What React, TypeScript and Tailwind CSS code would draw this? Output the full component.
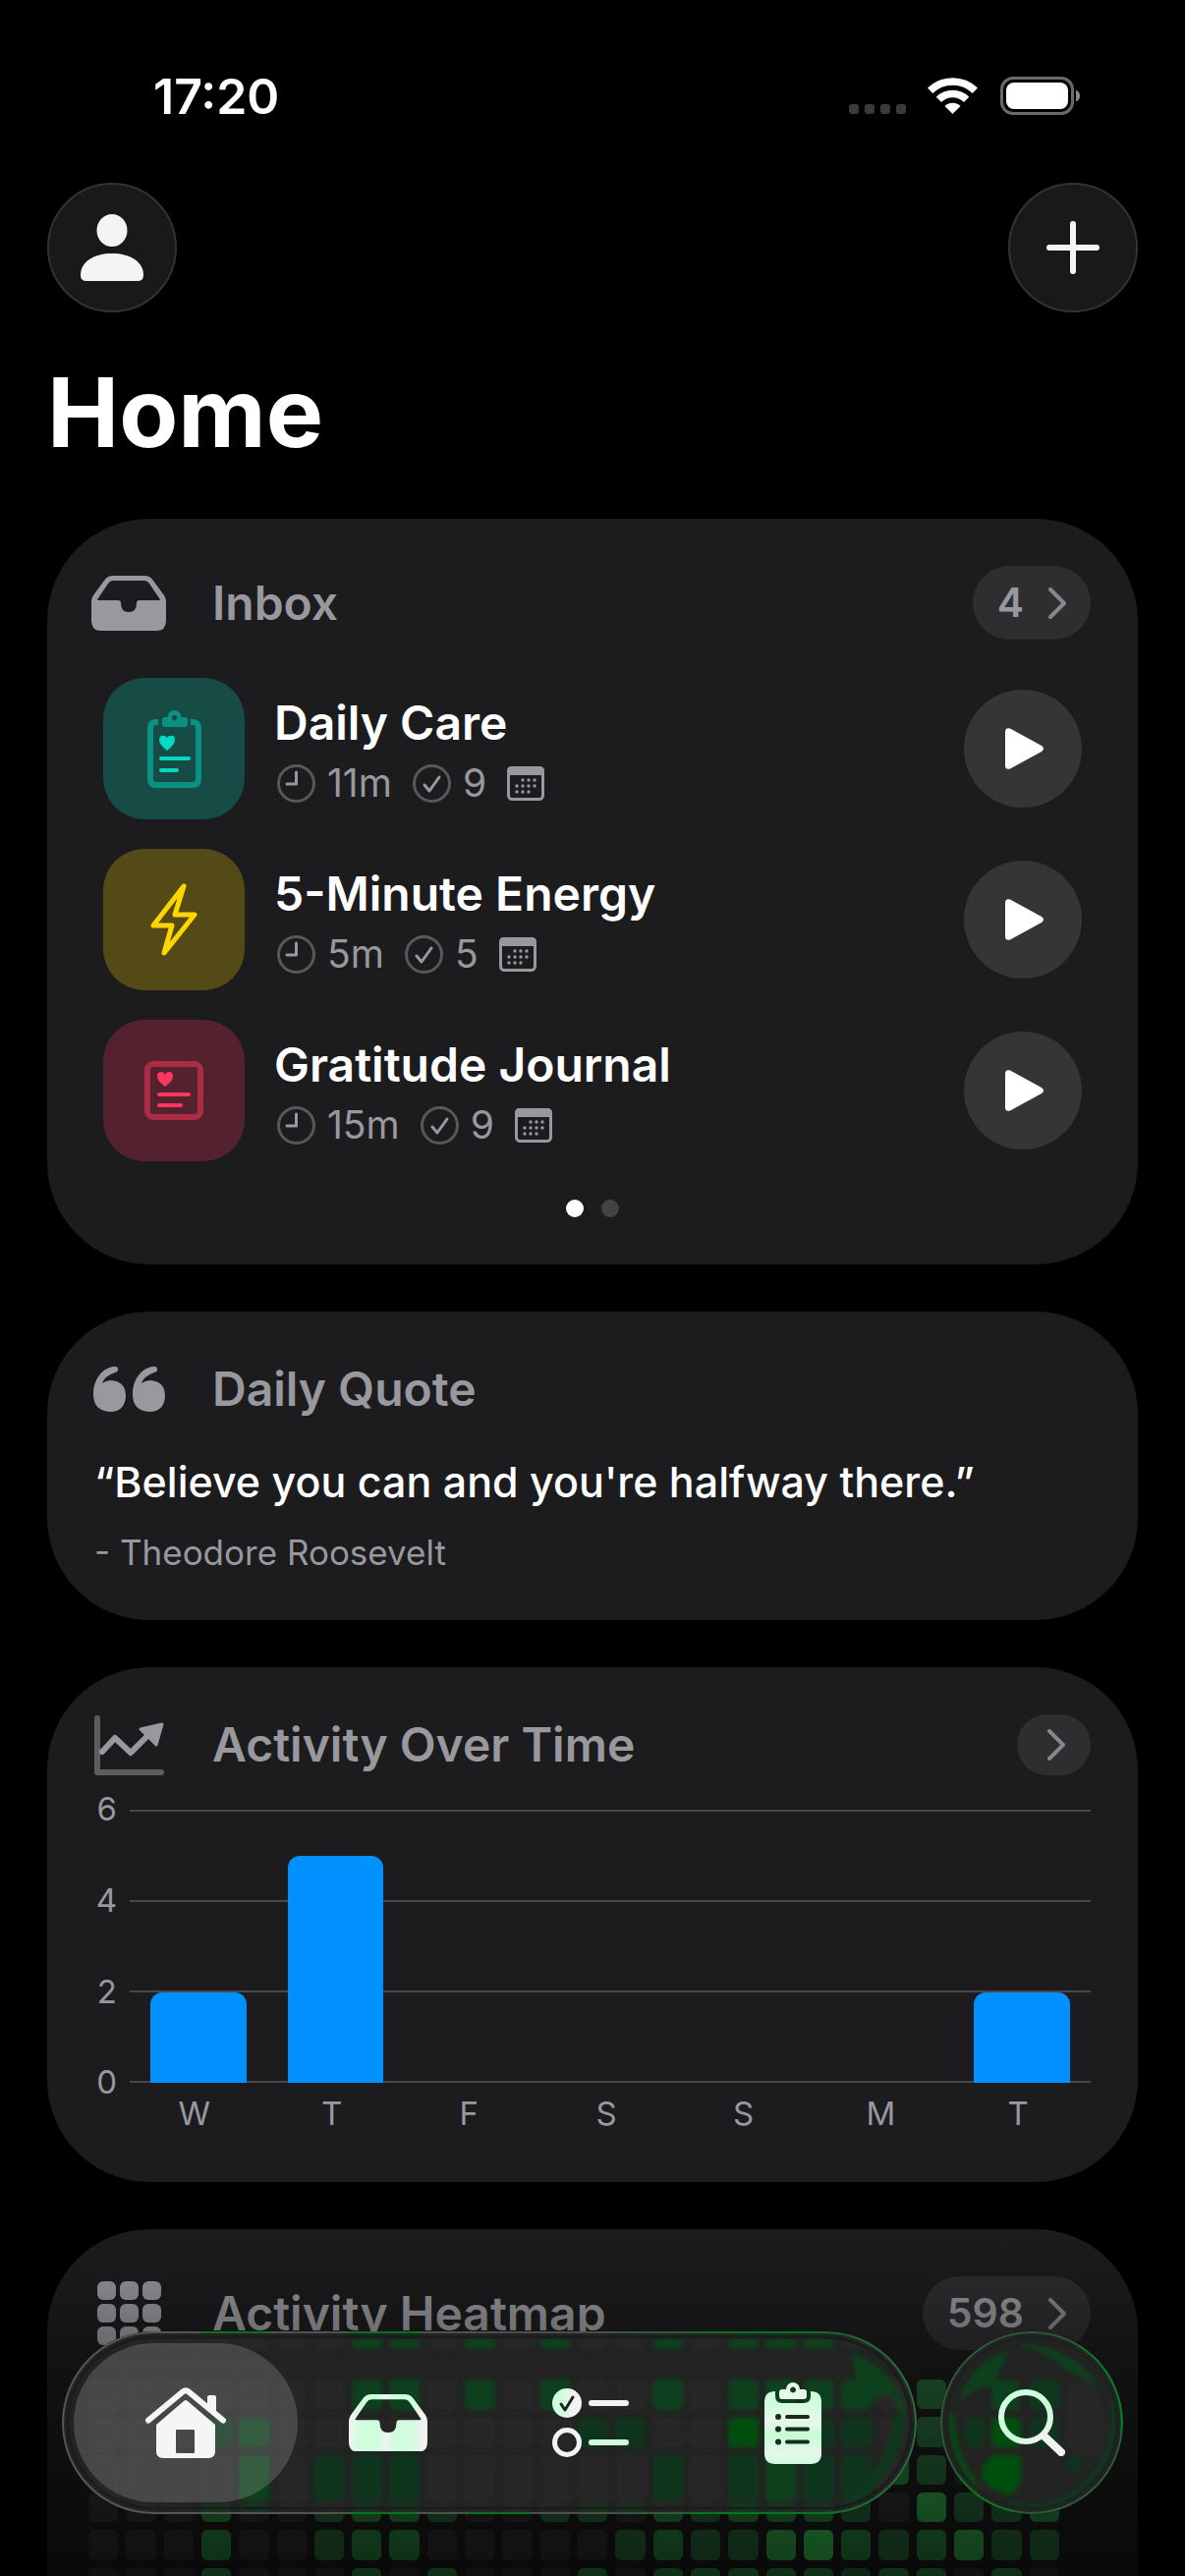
import type { ReactNode } from 'react'

const routines = [
  { title: 'Daily Care', minutes: '11m', tasks: 9, tile: 'bg-[#174b46]', icon: <CareIcon /> },
  { title: '5-Minute Energy', minutes: '5m', tasks: 5, tile: 'bg-[#544a17]', icon: <BoltIcon /> },
  { title: 'Gratitude Journal', minutes: '15m', tasks: 9, tile: 'bg-[#54222e]', icon: <JournalIcon /> },
]

const activity = [
  { day: 'W', value: 2 },
  { day: 'T', value: 5 },
  { day: 'F', value: 0 },
  { day: 'S', value: 0 },
  { day: 'S', value: 0 },
  { day: 'M', value: 0 },
  { day: 'T', value: 2 },
]
const maxActivity = 6
const ticks = [6, 4, 2, 0]

// one digit per day, 0 = no activity, 4 = most
const heatmap = [
  '00000002202020020222221000',
  '00020000000002210322221110',
  '00020022200000020222121000',
  '00020012210011021222103112',
  '00020012200000121134212311',
  '00020002020002022222122020',
  '00010002020002012022122010',
]

const levels = ['bg-[#2f2f31]', 'bg-[#28693a]', 'bg-[#28873e]', 'bg-[#32ad4e]', 'bg-[#32c852]']

export default function App() {
  return (
    <div className="relative h-screen overflow-hidden bg-black text-white antialiased [font-family:Inter,sans-serif]">
      <StatusBar />
      <main className="px-12">
        <header>
          <div className="flex items-center justify-between">
            <RoundButton label="Profile">
              <svg width="64" height="68" viewBox="0 0 64 68" fill="#f4f4f5">
                <ellipse cx="32" cy="16.500" rx="15.500" ry="16.500" />
                <path d="M0 62C0 48 14 40 32 40s32 8 32 22q0 6-6 6H6q-6 0-6-6z" />
              </svg>
            </RoundButton>
            <RoundButton label="Add">
              <svg width="54" height="54" viewBox="0 0 54 54" stroke="#f4f4f5" strokeWidth="6" strokeLinecap="round">
                <path d="M27 3v48M3 27h48" />
              </svg>
            </RoundButton>
          </div>
          <h1 className="mt-[42px] text-[98px] leading-[120px] font-bold">Home</h1>
        </header>

        <div className="mt-12 flex flex-col gap-12">
          <Card title="Inbox" icon={<TrayIcon className="w-[76px]" />} action={<MoreButton label="Open inbox" count={4} />}>
            <ul className="mt-[39px] flex flex-col gap-[30px] px-[9px]">
              {routines.map((routine) => (
                <li key={routine.title} className="flex items-center">
                  <div className={`flex size-36 items-center justify-center rounded-[42px] ${routine.tile}`}>
                    {routine.icon}
                  </div>
                  <div className="ml-[30px] flex-1 pt-1.5">
                    <h3 className="text-[48px] leading-[60px] font-semibold">{routine.title}</h3>
                    <div className="mt-[5px] flex h-[54px] items-center text-[39px] text-[#98989e]">
                      <ClockIcon />
                      <span className="ml-3">{routine.minutes}</span>
                      <CheckIcon />
                      <span className="ml-3">{routine.tasks}</span>
                      <CalendarIcon />
                    </div>
                  </div>
                  <button
                    aria-label={`Start ${routine.title}`}
                    className="flex size-[120px] items-center justify-center rounded-full bg-[#353537]"
                  >
                    <svg width="43" height="44" viewBox="0 0 43 44" fill="white">
                      <path d="M3 5Q3 0 8 1.500L40 19q4 3 0 6L8 42.500Q3 44 3 39z" />
                    </svg>
                  </button>
                </li>
              ))}
            </ul>
            <div className="mt-[39px] flex justify-center gap-[18px]">
              <span className="size-[18px] rounded-full bg-white" />
              <span className="size-[18px] rounded-full bg-[#434346]" />
            </div>
          </Card>

          <Card title="Daily Quote" icon={<QuoteIcon />}>
            <blockquote>
              <p className="mt-9 text-[43px] leading-[54px] font-medium">“Believe you can and you're halfway there.”</p>
              <footer className="mt-6 text-[35px] leading-[42px] text-[#98989e]">- Theodore Roosevelt</footer>
            </blockquote>
          </Card>

          <Card title="Activity Over Time" icon={<TrendIcon />} action={<MoreButton label="Open activity" />}>
            <ActivityChart />
          </Card>

          <Card title="Activity Heatmap" icon={<GridIcon />} action={<MoreButton label="Open heatmap" count={598} />}>
            <div className="mt-[30px] mr-8 -ml-1.5 grid grid-cols-[repeat(26,minmax(0,1fr))] gap-2">
              {heatmap.flatMap((row, y) =>
                row.split('').map((level, x) => (
                  <span key={`${y}-${x}`} className={`aspect-square rounded-md ${levels[Number(level)]}`} />
                ))
              )}
            </div>
          </Card>
        </div>
      </main>
      <div className="pointer-events-none absolute inset-x-0 bottom-0 h-[350px] bg-linear-to-b from-transparent via-black/42 via-[45%] to-black/65" />
      <TabBar />
    </div>
  )
}

function StatusBar() {
  return (
    <div className="flex items-center justify-between pt-16 pr-[107px] pb-[54px] pl-[156px]">
      <time className="text-[50px] leading-[68px] font-semibold">17:20</time>
      <div className="flex items-center">
        <svg width="58" height="38" viewBox="0 0 58 38" fill="#3a3a3a">
          <rect x="0" y="27" width="10" height="10" rx="3" />
          <rect x="16" y="27" width="10" height="10" rx="3" />
          <rect x="32" y="27" width="10" height="10" rx="3" />
          <rect x="48" y="27" width="10" height="10" rx="3" />
        </svg>
        <svg className="ml-[22px]" width="51" height="38" viewBox="0 0 51 38" fill="none" stroke="white" strokeWidth="7.500">
          <path d="M2.600 13.200a33 33 0 0 1 45.800 0" />
          <path d="M11.400 22.400a20 20 0 0 1 28.200 0" />
          <path d="M25.500 37l-8-8a11.500 11.500 0 0 1 16 0z" fill="white" stroke="none" />
        </svg>
        <svg className="ml-[23px]" width="81" height="40" viewBox="0 0 81 40">
          <rect x="1.500" y="1.500" width="72" height="36" rx="11.500" fill="none" stroke="#6a6a6a" strokeWidth="3" />
          <rect x="6" y="6" width="63" height="27" rx="8" fill="white" />
          <path d="M77 13.500q4 2 4 6t-4 6z" fill="#8a8a8a" />
        </svg>
      </div>
    </div>
  )
}

function RoundButton({ label, children }: { label: string; children: ReactNode }) {
  return (
    <button
      aria-label={label}
      className="flex size-[132px] items-center justify-center rounded-full border-2 border-[#323233] bg-[#191919]"
    >
      {children}
    </button>
  )
}

type CardProps = { title: string; icon: ReactNode; action?: ReactNode; children: ReactNode }

function Card({ title, icon, action, children }: CardProps) {
  return (
    <section className="rounded-[104px] bg-[#1c1c1e] p-12">
      <div className="flex min-h-[62px] items-center">
        <div className="flex w-[70px] justify-center *:shrink-0">{icon}</div>
        <h2 className="ml-[50px] flex-1 text-[48px] leading-[60px] font-semibold text-[#98989e]">{title}</h2>
        {action}
      </div>
      {children}
    </section>
  )
}

function MoreButton({ label, count }: { label: string; count?: number }) {
  const chevron = (
    <svg width="19" height="32" viewBox="0 0 19 32" fill="none" stroke="#87878b" strokeWidth="4" strokeLinecap="round" strokeLinejoin="round">
      <path d="M3 2l14 14L3 30" />
    </svg>
  )
  if (count === undefined) {
    return (
      <button aria-label={label} className="flex h-[62px] w-[75px] items-center justify-center rounded-full bg-[#2e2e30] pl-1">
        {chevron}
      </button>
    )
  }
  return (
    <button
      aria-label={`${label}, ${count}`}
      className="flex h-[75px] items-center gap-6 rounded-full bg-[#2e2e30] px-[25px] text-[41px] font-semibold text-[#98989e]"
    >
      {count}
      {chevron}
    </button>
  )
}

function ActivityChart() {
  return (
    <div className="mt-[35px] text-[33px] text-[#98989e]">
      <div className="flex h-[278px]">
        <div className="flex w-[23px] flex-col justify-between">
          {ticks.map((tick) => (
            <span key={tick} className="flex h-0 items-center justify-end">{tick}</span>
          ))}
        </div>
        <div className="relative ml-[13px] flex-1">
          <div className="absolute inset-0 flex flex-col justify-between">
            {ticks.map((tick) => (
              <div key={tick} className="h-0.5 bg-[#48484a]" />
            ))}
          </div>
          <div className="relative grid h-full grid-cols-7 items-end pt-px">
            {activity.map((item, i) => (
              <div
                key={i}
                className="mx-auto w-[70%] rounded-t-xl bg-[#0091ff]"
                style={{ height: `${(item.value / maxActivity) * 100}%` }}
              />
            ))}
          </div>
        </div>
      </div>
      <div className="mt-2.5 mr-1 ml-8 grid grid-cols-7 text-center leading-[43px]">
        {activity.map((item, i) => (
          <span key={i}>{item.day}</span>
        ))}
      </div>
    </div>
  )
}

function TabBar() {
  return (
    <nav className="absolute inset-x-[63px] bottom-[63px] flex gap-6">
      <div className="relative flex h-[186px] flex-1 overflow-hidden rounded-full bg-[#232323] px-[23px] py-3">
        <BarGlass />
        <a href="#home" aria-label="Home" aria-current="page" className="relative flex flex-1 items-center justify-center">
          <span className="absolute -inset-x-[11px] inset-y-0 rounded-full bg-white/16" />
          <HouseIcon />
        </a>
        <a href="#inbox" aria-label="Inbox" className="relative flex flex-1 items-center justify-center">
          <TrayIcon className="w-20" fill="url(#tray-tint)" />
        </a>
        <a href="#tasks" aria-label="Tasks" className="relative flex flex-1 items-center justify-center">
          <ChecklistIcon />
        </a>
        <a href="#routines" aria-label="Routines" className="relative flex flex-1 items-center justify-center">
          <ClipboardIcon />
        </a>
      </div>
      <button aria-label="Search" className="relative flex size-[186px] items-center justify-center overflow-hidden rounded-full bg-[#232323]">
        <SearchGlass />
        <svg className="relative" width="68" height="68" viewBox="0 0 68 68" fill="none" strokeLinecap="round">
          <defs>
            <linearGradient id="search-tint" x1="0" y1="0" x2="0.700" y2="1">
              <stop offset="0.300" stopColor="#d3fddf" />
              <stop offset="0.750" stopColor="#c9fbd6" />
              <stop offset="1" stopColor="#f0f3f1" />
            </linearGradient>
          </defs>
          <circle cx="28" cy="28" r="25" stroke="url(#search-tint)" strokeWidth="6" />
          <path d="M47 48l17 16" stroke="#f0f3f1" strokeWidth="8" />
        </svg>
      </button>
    </nav>
  )
}

// bands of the heatmap seen through the bar: [top, height, columns]
const glassBands: [number, number, string][] = [
  [6, 12, '0000000220202002022200'],
  [49, 31, '0000000220202002022220'],
  [88, 30, '0001200000000110031110'],
  [126, 47, '0000201110000001012110'],
  [177, 7, '0002200220000220032200'],
]
const glassFills = ['#272728', '#11351b', '#10401c', '#04500f']

function BarGlass() {
  return (
    <svg className="absolute inset-0 size-full" viewBox="0 0 870 186" preserveAspectRatio="none" fill="none">
      <defs>
        <filter id="soft" x="-10%" y="-10%" width="120%" height="120%">
          <feGaussianBlur stdDeviation="2.500" />
        </filter>
        <linearGradient id="bar-rim" x1="0" y1="0" x2="1" y2="0">
          <stop offset="0" stopColor="#58585b" />
          <stop offset="0.600" stopColor="#4c4f4d" />
          <stop offset="0.850" stopColor="#0b6a22" />
          <stop offset="1" stopColor="#2b7040" />
        </linearGradient>
      </defs>
      <g filter="url(#soft)">
        {glassBands.map(([y, h, cols]) =>
          cols.split('').map((level, i) => (
            <rect key={`${y}-${i}`} x={27 + i * 38.3} y={y} width="31" height={h} rx="5" fill={glassFills[Number(level)]} />
          ))
        )}
        <path d="M804 22q44 16 56 62l-4 10q-8-34-22-30-14 18-34 12-8-14 8-26z" fill="#10401c" />
        <path d="M852 86q0 50-50 88" stroke="#11381b" strokeWidth="12" />
      </g>
      <rect x="6" y="6" width="858" height="174" rx="87" stroke="#1b1c1b" strokeWidth="3" />
      <rect x="1" y="1" width="868" height="184" rx="92" stroke="url(#bar-rim)" strokeWidth="2" />
      <path d="M413 185H477M141 1H212M290 1H365M295 185H360M640 185H790M640 1H770" stroke="#08741f" strokeWidth="2" />
    </svg>
  )
}

function SearchGlass() {
  return (
    <svg className="absolute inset-0 size-full" viewBox="0 0 186 186" fill="none">
      <g filter="url(#soft)">
        <path d="M82 12q58 4 84 52-14-18-34-22-22-22-50-26z" fill="#10401c" />
        <path d="M18 74q14-48 54-54-16 22-14 30h22v30H52V56q-18 0-34 18z" fill="#10401c" />
        <path d="M9 84q0 50 32 82l-6-16Q14 120 14 84z" fill="#04500f" />
        <rect x="90" y="49" width="31" height="31" rx="6" fill="#11381b" />
        <rect x="24" y="88" width="22" height="30" rx="8" fill="#11351b" />
        <rect x="52" y="88" width="30" height="30" rx="5" fill="#04500f" />
        <rect x="90" y="88" width="31" height="30" rx="5" fill="#11351b" />
        <path d="M54 126h28v18q-2 20-12 22-24-6-29-20 2-12 13-20z" fill="#04500f" />
        <circle cx="136" cy="135" r="8" fill="#11351b" />
        <path d="M128 60q14-20 28 0 18 30 8 60-6 12-14 4-28 6-22-24z" fill="#272728" />
        <path d="M176 70q8 60-40 96-30 20-66 8" stroke="#11381b" strokeWidth="6" />
      </g>
      <circle cx="93" cy="93" r="87" stroke="#1c211d" strokeWidth="2" />
      <circle cx="93" cy="93" r="92" stroke="#2c5c3a" strokeWidth="2" />
      <path d="M140 14a92 92 0 0 1 44 90M18 146a92 92 0 0 0 56 37" stroke="#067a20" strokeWidth="2" />
    </svg>
  )
}

function TrayIcon({ className, fill = '#98989e' }: { className: string; fill?: string }) {
  return (
    <svg className={className} viewBox="0 0 76 56" fill={fill} fillRule="evenodd">
      <defs>
        <linearGradient id="tray-tint">
          <stop offset="0" stopColor="#f0f3f1" />
          <stop offset="0.150" stopColor="#d0fddd" />
          <stop offset="0.380" stopColor="#d0fddd" />
          <stop offset="0.480" stopColor="#f0f3f1" />
          <stop offset="0.580" stopColor="#d0fddd" />
          <stop offset="0.800" stopColor="#d0fddd" />
          <stop offset="0.950" stopColor="#f0f3f1" />
        </linearGradient>
      </defs>
      <path d="M0 26q0-3 2-6L13 5q3-5 9-5h32q6 0 9 5l11 15q2 3 2 6v20q0 10-10 10H10Q0 56 0 46zM22 5q-3 0-5 3L6.500 23.500q-1 1.500 1 1.500H27q3 0 3 3 0 9 8 9t8-9q0-3 3-3h19.500q2 0 1-1.500L59 8q-2-3-5-3z" />
    </svg>
  )
}

function QuoteIcon() {
  const mark = 'M0 28C0 13 9 2 20 0q4-1 5 2t-3 4Q11 10 9 17q4-3 9-3 15 1 15 16-1 16-16 16Q0 45 0 28z'
  return (
    <svg width="73" height="46" viewBox="0 0 73 46" fill="#98989e">
      <path d={mark} />
      <path d={mark} transform="translate(40 0)" />
    </svg>
  )
}

function TrendIcon() {
  return (
    <svg width="71" height="61" viewBox="0 0 71 61" fill="none" strokeLinecap="round" strokeLinejoin="round">
      <path d="M3 3v55h65" stroke="#5d5d60" strokeWidth="6" />
      <path d="M8 37l13-14 16 15 20-20" stroke="#98989e" strokeWidth="6" />
      <path d="M47 14l22-5-6 21z" fill="#98989e" stroke="#98989e" strokeWidth="3" />
    </svg>
  )
}

function GridIcon() {
  return (
    <div className="grid grid-cols-3 gap-1">
      {Array.from({ length: 9 }, (_, i) => (
        <span key={i} className="size-[19px] rounded-[6px] bg-[#98989e]" />
      ))}
    </div>
  )
}

function CareIcon() {
  return (
    <svg width="55" height="79" viewBox="0 0 55 79" fill="none" strokeLinecap="round">
      <path d="M11 12H9q-6 0-6 6v52q0 6 6 6h37q6 0 6-6V18q0-6-6-6h-2" stroke="#0b9181" strokeWidth="6" strokeLinecap="butt" />
      <path
        d="M18 7h2.500a7 7 0 0 1 14 0H38q3 0 3 3v4q0 3-3 3H18q-3 0-3-3v-4q0-3 3-3zM27.500 5a2.700 2.700 0 1 0 .1 0z"
        fill="#0b9181"
        fillRule="evenodd"
      />
      <path d="M20 41q-8-6-8-11 1-6 5-4 2 0 3 2 1-2 3-2 5-1 5 4 0 5-8 11z" fill="#00dac3" />
      <path d="M14 49h28M14 61h16" stroke="#00dac3" strokeWidth="4" />
    </svg>
  )
}

function BoltIcon() {
  return (
    <svg width="48" height="74" viewBox="0 0 48 74" fill="none" stroke="#ffd600" strokeWidth="5" strokeLinejoin="round">
      <path d="M34 3L3 43h19l-8 28 31-39H25z" />
    </svg>
  )
}

function JournalIcon() {
  return (
    <svg width="60" height="60" viewBox="0 0 60 60" fill="none" strokeLinecap="round">
      <rect x="3" y="3" width="54" height="54" rx="6" stroke="#ac2b45" strokeWidth="6" />
      <path d="M21 26q-8-6-8-10 0-5 4-5 3 0 4 3 1-3 4-3 4 0 4 5 0 4-8 10z" fill="#ff375f" />
      <path d="M15 34h30M15 45h22" stroke="#ff375f" strokeWidth="4" />
    </svg>
  )
}

function ClockIcon() {
  return (
    <svg className="ml-[3px]" width="39" height="39" viewBox="0 0 39 39" fill="none" strokeWidth="3" strokeLinecap="round">
      <circle cx="19.500" cy="19.500" r="18" stroke="#58585b" />
      <path d="M19.500 8v12H10" stroke="#98989e" strokeLinejoin="round" />
    </svg>
  )
}

function CheckIcon() {
  return (
    <svg className="ml-[21px]" width="39" height="39" viewBox="0 0 39 39" fill="none" strokeWidth="3" strokeLinecap="round">
      <circle cx="19.500" cy="19.500" r="18" stroke="#58585b" />
      <path d="M12 21l5 6 10-14" stroke="#98989e" strokeLinejoin="round" />
    </svg>
  )
}

function CalendarIcon() {
  const dots = [[16, 14], [22, 14], [28, 14], [10, 20], [16, 20], [22, 20], [28, 20], [10, 26], [16, 26], [22, 26]]
  return (
    <svg className="ml-[21px]" width="38" height="35" viewBox="0 0 38 35" fill="#98989e">
      <rect x="1.500" y="1.500" width="35" height="32" rx="4" fill="none" stroke="#98989e" strokeWidth="3" />
      <path d="M0 9V5q0-5 5-5h28q5 0 5 5v4z" />
      {dots.map(([x, y]) => (
        <circle key={`${x}-${y}`} cx={x} cy={y} r="1.700" />
      ))}
    </svg>
  )
}

function HouseIcon() {
  return (
    <svg className="relative" width="82" height="72" viewBox="0 0 82 72" fill="#f5f5f5">
      <path d="M63 10q0-2 2-2h5q2 0 2 2v17l-9-8z" />
      <path d="M3 33.500L38 4.500q3-2.500 6 0l35 29" fill="none" stroke="#f5f5f5" strokeWidth="6" strokeLinecap="round" />
      <path d="M39 14q2-2 4 0l28 24v27q0 7-7 7H18q-7 0-7-7V38zM32 43q-1 0-1 1v22q0 1 1 1h17q1 0 1-1V44q0-1-1-1z" fillRule="evenodd" />
    </svg>
  )
}

function ChecklistIcon() {
  return (
    <svg width="78" height="70" viewBox="0 0 78 70" fill="none" stroke="#f2f4f3" strokeLinecap="round">
      <defs>
        <linearGradient id="check-tint">
          <stop offset="0.350" stopColor="#d0fddd" />
          <stop offset="0.700" stopColor="#f2f4f3" />
        </linearGradient>
      </defs>
      <circle cx="15" cy="15" r="15" fill="url(#check-tint)" stroke="none" />
      <path d="M9 16l4 6 8-13" stroke="#232323" strokeWidth="3" strokeLinejoin="round" />
      <circle cx="15" cy="55" r="12.500" strokeWidth="5" />
      <path d="M40 15h35" strokeWidth="6" />
      <path d="M40 55h35" stroke="#d0fddd" strokeWidth="6" />
    </svg>
  )
}

function ClipboardIcon() {
  return (
    <svg width="58" height="83" viewBox="0 0 58 83">
      <defs>
        <linearGradient id="clip-tint" x1="0" y1="0" x2="0" y2="1">
          <stop offset="0.200" stopColor="#d0fddd" />
          <stop offset="0.400" stopColor="#eaf6ed" />
          <stop offset="0.600" stopColor="#c4fcd3" />
          <stop offset="0.850" stopColor="#e6f8eb" />
          <stop offset="1" stopColor="#d0fddd" />
        </linearGradient>
      </defs>
      <path d="M11 9v5q0 7 7 7h22q7 0 7-7V9q11 0 11 11v52q0 11-11 11H11Q0 83 0 72V20Q0 9 11 9z" fill="url(#clip-tint)" />
      <path
        d="M18 7h4a7 7 0 0 1 14 0h4q3 0 3 3v4q0 3-3 3H18q-3 0-3-3v-4q0-3 3-3zM29 4.500a3 3 0 1 0 .1 0z"
        fill="#e4f9ea"
        fillRule="evenodd"
      />
      <g stroke="#14301c" strokeLinecap="round">
        <path d="M23 35h21M23 47.500h21M23 60.500h21" strokeWidth="4" />
        <path d="M14 35h.1M14 47.500h.1M14 60.500h.1" strokeWidth="6" />
      </g>
    </svg>
  )
}
